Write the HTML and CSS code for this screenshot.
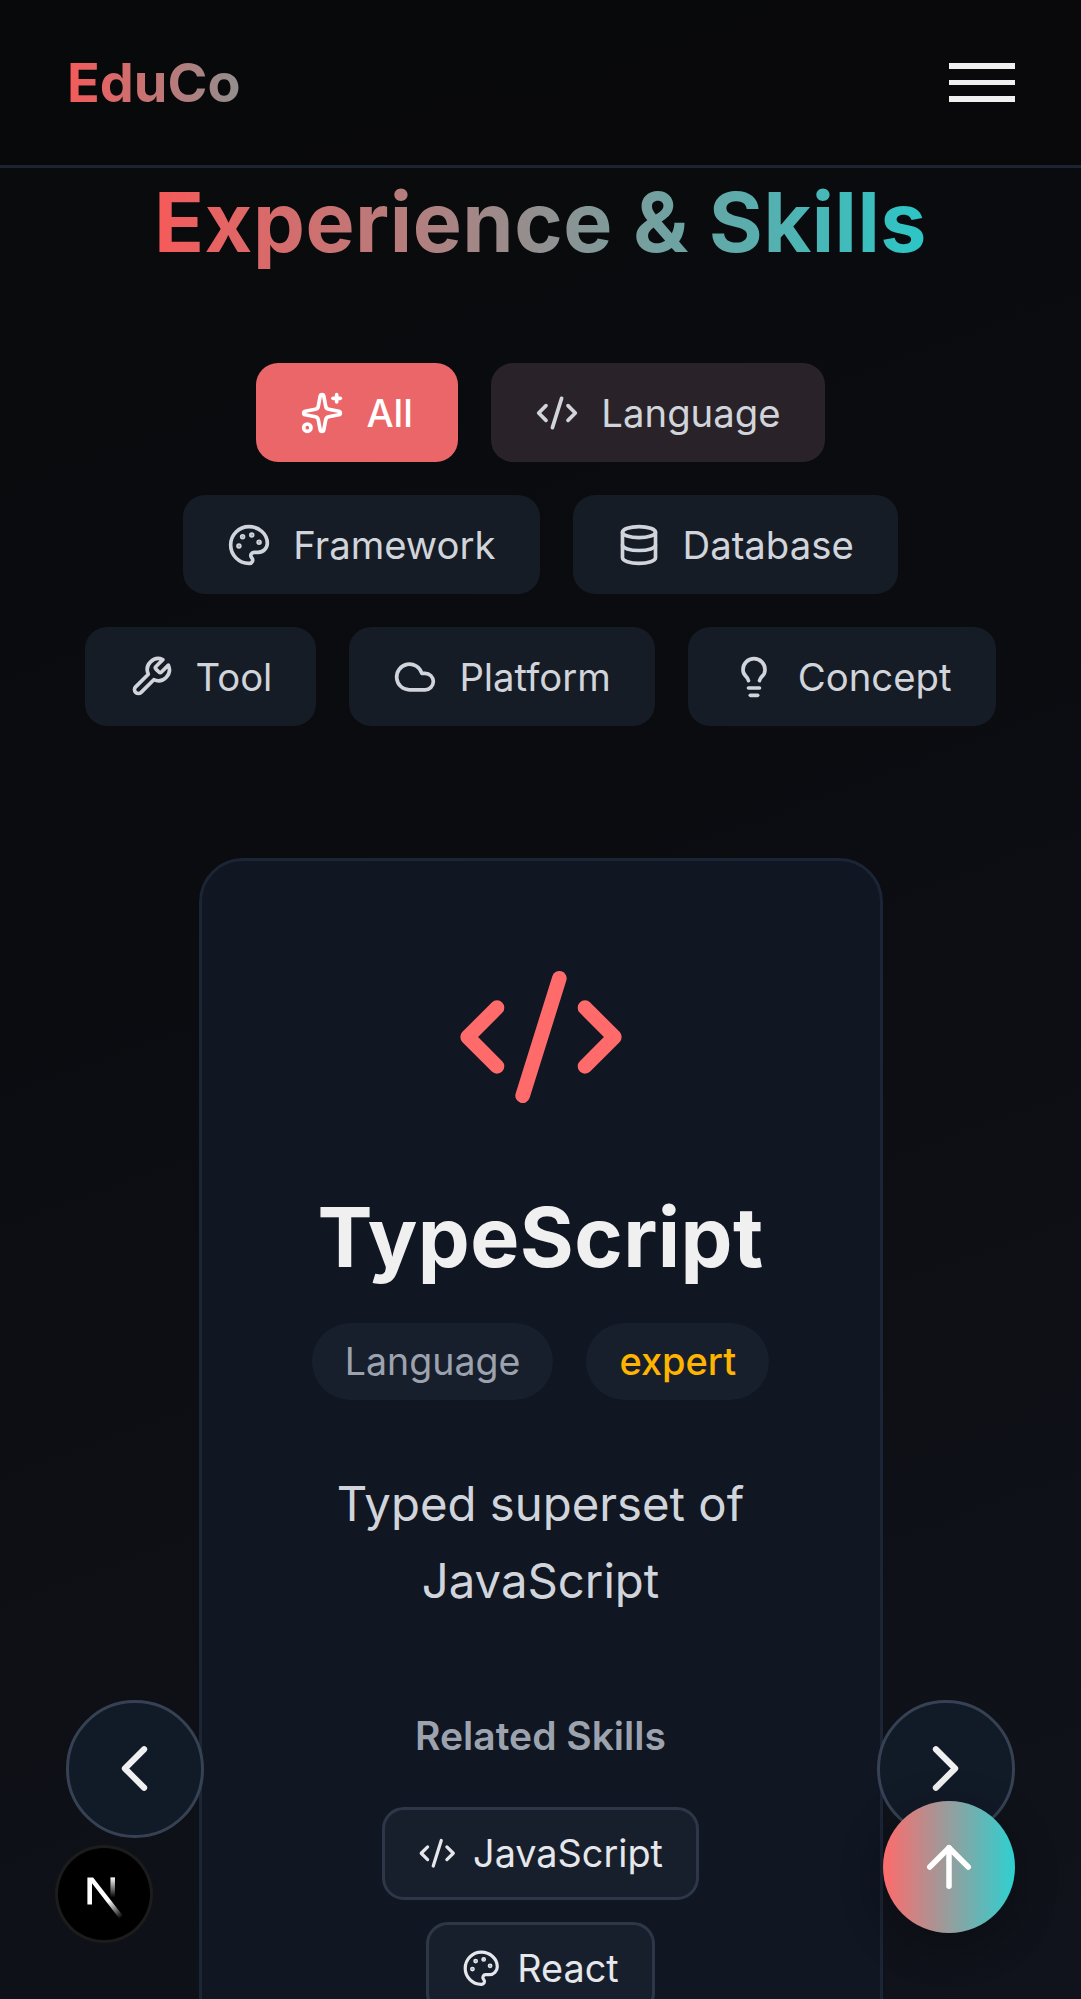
FILE: index.html
```html
<!DOCTYPE html>
<html lang="en">
<head>
<meta charset="utf-8">
<title>EduCo</title>
<link rel="stylesheet" href="styles.css">
</head>
<body>
<div class="page">
  <header class="header">
    <span class="logo">EduCo</span>
    <div class="burger"><span></span><span></span><span></span></div>
  </header>
  <main class="main">
    <h1 class="title"><span>Experience &amp; Skills</span></h1>
    <div class="filters">
      <button class="filter active"><svg class="ico" viewBox="0 0 24 24"><path d="M11.017 2.814a1 1 0 0 1 1.966 0l1.051 5.558a2 2 0 0 0 1.594 1.594l5.558 1.051a1 1 0 0 1 0 1.966l-5.558 1.051a2 2 0 0 0-1.594 1.594l-1.051 5.558a1 1 0 0 1-1.966 0l-1.051-5.558a2 2 0 0 0-1.594-1.594l-5.558-1.051a1 1 0 0 1 0-1.966l5.558-1.051a2 2 0 0 0 1.594-1.594z"/><path d="M20 2v4"/><path d="M22 4h-4"/><circle cx="4" cy="20" r="2"/></svg>All</button>
      <button class="filter hover"><svg class="ico" viewBox="0 0 24 24"><path d="m18 16 4-4-4-4"/><path d="m6 8-4 4 4 4"/><path d="m14.5 4-5 16"/></svg>Language</button>
      <button class="filter"><svg class="ico" viewBox="0 0 24 24"><path d="M12 22a1 1 0 0 1 0-20 10 9 0 0 1 10 9 5 5 0 0 1-5 5h-2.25a1.75 1.75 0 0 0-1.4 2.8l.3.4a1.75 1.75 0 0 1-1.4 2.8z"/><circle class="dot" cx="13.5" cy="6.5" r=".5"/><circle class="dot" cx="17.5" cy="10.5" r=".5"/><circle class="dot" cx="6.5" cy="12.5" r=".5"/><circle class="dot" cx="8.5" cy="7.5" r=".5"/></svg>Framework</button>
      <button class="filter"><svg class="ico" viewBox="0 0 24 24"><ellipse cx="12" cy="5" rx="9" ry="3"/><path d="M3 5V19A9 3 0 0 0 21 19V5"/><path d="M3 12A9 3 0 0 0 21 12"/></svg>Database</button>
      <button class="filter"><svg class="ico" viewBox="0 0 24 24"><path d="M14.7 6.3a1 1 0 0 0 0 1.4l1.6 1.6a1 1 0 0 0 1.4 0l3.77-3.77a6 6 0 0 1-7.94 7.94l-6.91 6.91a2.12 2.12 0 0 1-3-3l6.91-6.91a6 6 0 0 1 7.94-7.94l-3.76 3.76z"/></svg>Tool</button>
      <button class="filter"><svg class="ico" viewBox="0 0 24 24"><path d="M17.5 19H9a7 7 0 1 1 6.71-9h1.79a4.5 4.5 0 1 1 0 9Z"/></svg>Platform</button>
      <button class="filter"><svg class="ico" viewBox="0 0 24 24"><path d="M15 14c.2-1 .7-1.7 1.5-2.5 1-.9 1.5-2.2 1.5-3.5A6 6 0 0 0 6 8c0 1 .2 2.2 1.5 3.5.7.7 1.3 1.5 1.5 2.5"/><path d="M9 18h6"/><path d="M10 22h4"/></svg>Concept</button>
    </div>
    <article class="card">
      <svg class="card-icon" viewBox="0 0 24 24"><path d="m18 16 4-4-4-4"/><path d="m6 8-4 4 4 4"/><path d="m14.5 4-5 16"/></svg>
      <h2 class="card-title">TypeScript</h2>
      <div class="pills">
        <span class="pill">Language</span>
        <span class="pill expert">expert</span>
      </div>
      <p class="desc">Typed superset of JavaScript</p>
      <h3 class="related">Related Skills</h3>
      <div class="chips">
        <span class="chip"><svg class="ico small" viewBox="0 0 24 24"><path d="m18 16 4-4-4-4"/><path d="m6 8-4 4 4 4"/><path d="m14.5 4-5 16"/></svg>JavaScript</span>
        <span class="chip"><svg class="ico small" viewBox="0 0 24 24"><path d="M12 22a1 1 0 0 1 0-20 10 9 0 0 1 10 9 5 5 0 0 1-5 5h-2.25a1.75 1.75 0 0 0-1.4 2.8l.3.4a1.75 1.75 0 0 1-1.4 2.8z"/><circle class="dot" cx="13.5" cy="6.5" r=".5"/><circle class="dot" cx="17.5" cy="10.5" r=".5"/><circle class="dot" cx="6.5" cy="12.5" r=".5"/><circle class="dot" cx="8.5" cy="7.5" r=".5"/></svg>React</span>
      </div>
    </article>
  </main>
  <button class="nav prev" aria-label="Previous"><svg class="chev" viewBox="0 0 24 24"><path d="m15 18-6-6 6-6"/></svg></button>
  <button class="nav next" aria-label="Next"><svg class="chev" viewBox="0 0 24 24"><path d="m9 18 6-6-6-6"/></svg></button>
  <button class="up" aria-label="Back to top"><svg class="up-icon" viewBox="0 0 24 24"><path d="m5 12 7-7 7 7"/><path d="M12 19V5"/></svg></button>
  <div class="badge">
    <svg class="badge-mark" viewBox="0 0 180 180">
      <defs>
        <linearGradient id="nA" x1="109" y1="116.5" x2="144.5" y2="160.5" gradientUnits="userSpaceOnUse"><stop offset="0" stop-color="#fff"/><stop offset="1" stop-color="#fff" stop-opacity="0"/></linearGradient>
        <linearGradient id="nB" x1="121" y1="54" x2="120.8" y2="106.9" gradientUnits="userSpaceOnUse"><stop offset="0" stop-color="#fff"/><stop offset="1" stop-color="#fff" stop-opacity="0"/></linearGradient>
      </defs>
      <path d="M149.508 157.52L69.142 54H54v71.97h12.114V69.384l73.885 95.461a90.304 90.304 0 009.509-7.325z" fill="url(#nA)"/>
      <rect x="115" y="54" width="12" height="72" fill="url(#nB)"/>
    </svg>
  </div>
</div>
</body>
</html>
```
FILE: styles.css
```css
* { box-sizing: border-box; }
html, body { margin: 0; padding: 0; }
body { font-family: Inter, "Liberation Sans", sans-serif; background: #0a0b0e; color: #f0f0f0; }
.page {
  position: relative;
  width: 1081px;
  height: 1999px;
  overflow: hidden;
  background: linear-gradient(160deg, #090a0b 0%, #0b0c10 40%, #10131b 100%);
}
.header {
  display: flex;
  justify-content: space-between;
  align-items: center;
  height: 168px;
  padding: 0 66px 0 67px;
  border-bottom: 3px solid #1c2432;
  background: rgba(8, 9, 10, .6);
}
.logo {
  display: inline-block;
  font-size: 54px;
  font-weight: 700;
  line-height: 1;
  background: linear-gradient(90deg, #f55a5a, #2cc5c5);
  background-size: 200% 100%;
  -webkit-background-clip: text;
  background-clip: text;
  color: transparent;
}
.burger { display: flex; flex-direction: column; gap: 11px; width: 66px; }
.burger span { display: block; height: 5.5px; background: #f0f0f0; }
.main { display: flex; flex-direction: column; align-items: center; }
.title { margin: 4px 0 0; font-size: 82.5px; line-height: 100px; font-weight: 700; letter-spacing: .5px; text-align: center; }
.title span {
  background: linear-gradient(90deg, #f75a5a, #2cc6c6);
  -webkit-background-clip: text;
  background-clip: text;
  color: transparent;
}
.filters {
  display: flex;
  flex-wrap: wrap;
  justify-content: center;
  gap: 33px;
  width: 949px;
  margin-top: 91px;
}
.filter {
  display: inline-flex;
  align-items: center;
  gap: 22px;
  height: 99px;
  padding: 0 44px;
  border: 0;
  border-radius: 22px;
  background: #161c25;
  color: #d1d5db;
  font: 400 38.3px Inter, "Liberation Sans", sans-serif;
}
.filter.active { padding: 0 45.5px 0 44px; background: #eb6668; color: #fff; font-weight: 500; }
.filter.hover { background: #292329; }
.ico {
  width: 44px;
  height: 44px;
  flex: none;
  fill: none;
  stroke: currentColor;
  stroke-width: 2;
  stroke-linecap: round;
  stroke-linejoin: round;
}
.ico.small { width: 38.5px; height: 38.5px; }
.dot { fill: currentColor; }
.card {
  display: flex;
  flex-direction: column;
  align-items: center;
  width: 684px;
  margin-top: 132px;
  padding: 88px 88px 88px;
  border: 3px solid #1c2535;
  border-radius: 44px;
  background: #101622;
  text-align: center;
}
.card-icon {
  width: 176px;
  height: 176px;
  fill: none;
  stroke: #ff6b6b;
  stroke-width: 2;
  stroke-linecap: round;
  stroke-linejoin: round;
}
.card-title { margin: 63px 0 0; font-size: 82.5px; line-height: 99px; font-weight: 700; letter-spacing: .4px; color: #f0f0f0; }
.pills { display: flex; gap: 33px; margin-top: 36px; }
.pill {
  padding: 11px 33px;
  border-radius: 38.5px;
  background: #181f2c;
  color: #9ca3af;
  font-size: 37.5px;
  line-height: 55px;
}
.pill.expert { color: #ffb400; font-size: 38px; font-weight: 500; }
.desc { margin: 65px 0 0; font-size: 47.3px; line-height: 77px; color: #d1d5db; font-weight: 400; }
.related { margin: 89px 0 0; font-size: 39px; line-height: 55px; font-weight: 600; color: #9ca3af; }
.chips { display: flex; flex-wrap: wrap; justify-content: center; gap: 22px; margin-top: 44px; }
.chip {
  display: inline-flex;
  align-items: center;
  gap: 16.5px;
  padding: 16px 33px;
  border: 3px solid #2d3748;
  border-radius: 22px;
  background: #181f2c;
  color: #e5e7eb;
  font-size: 37.8px;
  line-height: 55px;
}
.nav {
  position: absolute;
  top: 1700px;
  display: flex;
  align-items: center;
  justify-content: center;
  width: 137.5px;
  height: 137.5px;
  padding: 0;
  border: 3px solid #364153;
  border-radius: 50%;
  background: #111a27;
}
.prev { left: 66px; }
.next { left: 877px; }
.chev {
  width: 77px;
  height: 77px;
  fill: none;
  stroke: #f0f0f0;
  stroke-width: 1.9;
  stroke-linecap: round;
  stroke-linejoin: round;
}
.up {
  position: absolute;
  left: 883px;
  top: 1801px;
  display: flex;
  align-items: center;
  justify-content: center;
  width: 132px;
  height: 132px;
  padding: 0;
  border: 0;
  border-radius: 50%;
  background: linear-gradient(90deg, #ff6b6b, #2ed0d0);
  box-shadow: 0 11px 44px rgba(0, 0, 0, .3);
}
.up-icon {
  width: 66px;
  height: 66px;
  fill: none;
  stroke: #fff;
  stroke-width: 2;
  stroke-linecap: round;
  stroke-linejoin: round;
}
.badge {
  position: absolute;
  left: 58px;
  top: 1848px;
  display: flex;
  align-items: center;
  justify-content: center;
  width: 92px;
  height: 92px;
  border-radius: 50%;
  background: #000;
  box-shadow: 0 0 0 3px #1c1c1c;
}
.badge-mark { width: 68px; height: 68px; margin: 0 7px 6px 0; }
```
